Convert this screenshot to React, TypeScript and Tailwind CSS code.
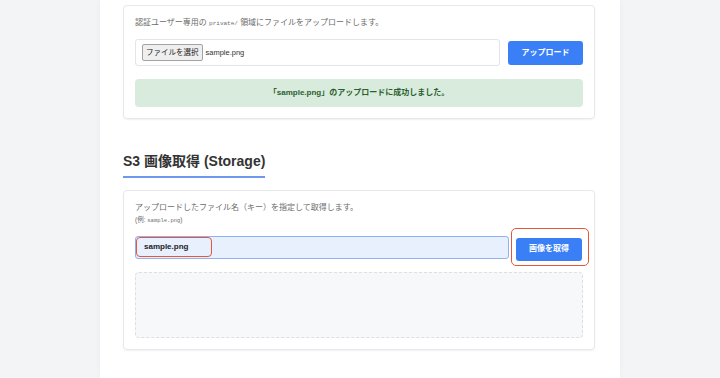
import React from "react";

export default function App() {
  const font = {
    fontFamily: '"Liberation Sans", "Noto Sans CJK JP", sans-serif',
  };
  return (
    <div className="min-h-screen w-full bg-[#f3f4f6] flex justify-center" style={font}>
      <div className="w-[520px] bg-white shadow-[0_0_6px_rgba(0,0,0,0.04)] pl-[23px] pr-[25px] pt-[5px] pb-[28px]">
        {/* Upload card */}
        <section className="border border-[#e6e8eb] rounded-[4px] shadow-[0_1px_2px_rgba(0,0,0,0.06)] p-[11px]">
          <p className="text-[8px] leading-[12px] text-[#6b6b6b]">
            認証ユーザー専用の{" "}
            <code className="font-['Liberation_Mono',monospace] text-[6px]">private/</code>{" "}
            領域にファイルをアップロードします。
          </p>
          <div className="mt-[9px] flex items-center gap-[8px]">
            <div className="flex-1 h-[27px] border border-[#e3e5e8] rounded-[3px] flex items-center pl-[6px] gap-[3px]">
              <span className="h-[17px] px-[3px] flex items-center border border-[#a3a3a3] bg-[#efefef] rounded-[2px] text-[7.5px] text-[#222]">
                ファイルを選択
              </span>
              <span className="text-[7.5px] text-[#333]">sample.png</span>
            </div>
            <button className="w-[75px] h-[24px] bg-[#3b7ff6] text-white rounded-[3px] text-[8px] font-bold">
              アップロード
            </button>
          </div>
          <div className="mt-[13px] h-[28px] bg-[#d9ebdc] rounded-[4px] flex items-center justify-center text-[8px] font-bold text-[#2a5f31]">
            「sample.png」のアップロードに成功しました。
          </div>
        </section>

        {/* Heading */}
        <h2 className="mt-[33px] w-fit text-[14px] leading-[18px] font-bold text-[#333] pb-[6px] border-b-2 border-[#6e98ee]">
          S3 画像取得 (Storage)
        </h2>

        {/* Get image card */}
        <section className="mt-[12px] border border-[#e6e8eb] rounded-[4px] shadow-[0_1px_2px_rgba(0,0,0,0.06)] p-[11px]">
          <p className="text-[8px] leading-[12px] text-[#6b6b6b]">
            アップロードしたファイル名（キー）を指定して取得します。
          </p>
          <p className="text-[6.5px] leading-[10px] text-[#6b6b6b] mt-[1px]">
            (例: <code className="font-['Liberation_Mono',monospace] text-[5.5px]">sample.png</code>)
          </p>
          <div className="mt-[8px] flex items-center gap-[7px]">
            <div className="relative flex-1 h-[23px] border border-[#8fb2f2] bg-[#e8effd] rounded-[3px] flex items-center pl-[8px]">
              <span className="text-[8px] font-bold text-[#222]">sample.png</span>
              <span className="absolute left-[0px] top-[0px] w-[76px] h-[20px] border-[1.5px] border-[#e4573f] rounded-[4px]" />
            </div>
            <div className="relative mr-[1px]">
              <button className="w-[66px] h-[23px] bg-[#3b7ff6] text-white rounded-[3px] text-[8px] font-bold">
                画像を取得
              </button>
              <span className="absolute -left-[5px] -right-[7px] -top-[6px] -bottom-[5px] border-[1.5px] border-[#e4573f] rounded-[5px]" />
            </div>
          </div>
          <div className="mt-[11px] h-[66px] bg-[#f7f8fa] border border-dashed border-[#dcdfe4] rounded-[4px]" />
        </section>
      </div>
    </div>
  );
}
